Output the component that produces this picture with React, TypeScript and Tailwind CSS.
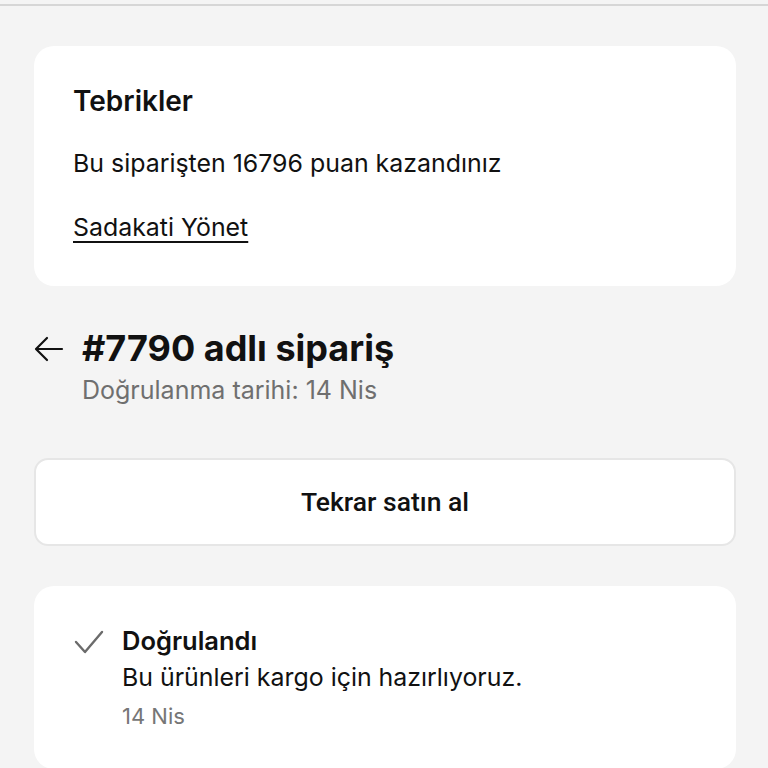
import React from 'react';

const sans = { fontFamily: 'Inter, "Noto Sans", "Liberation Sans", sans-serif' };

function BackArrow() {
  return (
    <svg width="30" height="26" viewBox="0 0 30 26" fill="none" stroke="#111" strokeWidth="2.2" strokeLinecap="round" strokeLinejoin="round">
      <path d="M28 13H3" />
      <path d="M13 2L2 13l11 11" />
    </svg>
  );
}

function Check() {
  return (
    <svg width="30" height="24" viewBox="0 0 30 24" fill="none" stroke="#6b6b6b" strokeWidth="2.4" strokeLinecap="round" strokeLinejoin="round">
      <path d="M2 12l9 10L28 2" />
    </svg>
  );
}

export default function App() {
  return (
    <div className="h-[768px] overflow-hidden bg-[#f4f4f4] text-[#111]" style={sans}>
      <div className="h-[4px]" />
      <div className="h-[2px] bg-[#d6d6d6]" />
      <div className="pl-[34px] pr-[32px] pt-[40px]">
        <div className="bg-white rounded-[20px] px-[39px] pt-[39px] pb-[44px]">
          <div className="text-[28px] font-semibold leading-[32px]">Tebrikler</div>
          <div className="text-[24.9px] leading-[30px] mt-[31px]">Bu siparişten 16796 puan kazandınız</div>
          <div className="text-[24.9px] leading-[30px] mt-[34px] underline underline-offset-[5px] decoration-[1.5px]">Sadakati Yönet</div>
        </div>

        <div className="mt-[42px] flex items-start gap-[18px]">
          <div className="pt-[8px]"><BackArrow /></div>
          <div>
            <div className="text-[36px] font-bold leading-[40px]">#7790 adlı sipariş</div>
            <div className="text-[25px] leading-[30px] text-[#6f6f6f] mt-[7px]">Doğrulanma tarihi: 14 Nis</div>
          </div>
        </div>

        <div
          className="mt-[53px] h-[88px] bg-white rounded-[14px] border-2 border-[#e6e6e6] flex items-center justify-center text-[26.5px] font-medium"
          style={{ fontFamily: 'Roboto, "Noto Sans", sans-serif' }}
        >
          Tekrar satın al
        </div>

        <div className="mt-[40px] bg-white rounded-[20px] px-[40px] pt-[40px] pb-[40px] flex gap-[18px]">
          <div className="pt-[4px]"><Check /></div>
          <div>
            <div className="text-[25.5px] font-semibold leading-[30px]">Doğrulandı</div>
            <div className="text-[24.9px] leading-[30px] mt-[6px]">Bu ürünleri kargo için hazırlıyoruz.</div>
            <div className="text-[22px] leading-[26px] text-[#767676] mt-[11px]">14 Nis</div>
          </div>
        </div>
      </div>
    </div>
  );
}
